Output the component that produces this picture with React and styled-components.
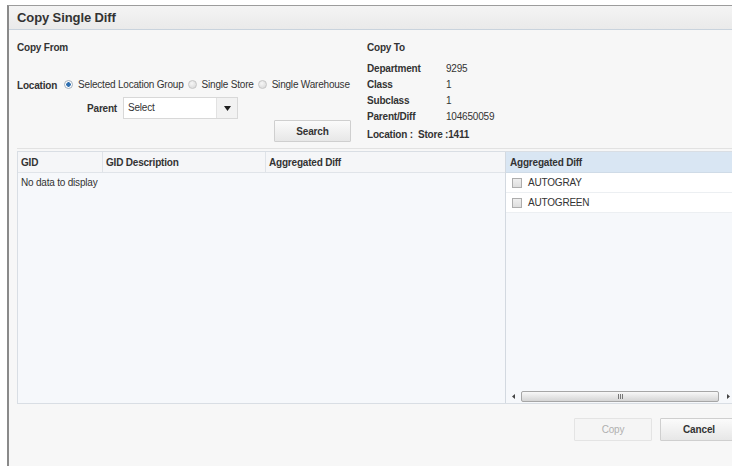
import React from "react";
import styled, { createGlobalStyle } from "styled-components";

const GlobalStyle = createGlobalStyle`
  html, body { margin: 0; padding: 0; overflow: hidden; background: #ffffff; }
  body { font-family: "Liberation Sans", Arial, sans-serif; color: #333333; }
  *, *::before, *::after { box-sizing: border-box; }
`;

const Page = styled.div`
  width: 732px;
  height: 466px;
  padding: 5px 0 0 7px;
  overflow: hidden;
`;

const Dialog = styled.section`
  width: 739px;
  height: 461px;
  display: flex;
  flex-direction: column;
  background: #f7f7f7;
  border-left: 2px solid #8a8a8a;
  border-top: 1px solid #9c9c9c;
`;

const TitleBar = styled.header`
  height: 24px;
  flex: none;
  display: flex;
  align-items: center;
  padding-left: 8px;
  background: linear-gradient(#f4f4f4, #eaeaea);
  border-bottom: 1px solid #c9d3dd;
  font-size: 13px;
  font-weight: bold;
  letter-spacing: -0.1px;
  color: #333333;
`;

const Body = styled.div`
  flex: 1;
  display: flex;
  flex-direction: column;
  padding: 0 8px;
  font-size: 10px;
  letter-spacing: -0.2px;
`;

const TopSection = styled.div`
  height: 119px;
  flex: none;
  display: flex;
  padding-top: 11px;
  border-bottom: 1px solid #e2e2e2;
`;

const FromColumn = styled.div`
  width: 334px;
  display: flex;
  flex-direction: column;
`;

const ToColumn = styled.div`
  margin-left: 16px;
  display: flex;
  flex-direction: column;
`;

const SectionTitle = styled.div`
  font-weight: bold;
  height: 14px;
  line-height: 14px;
`;

const LocationRow = styled.div`
  margin-top: 21px;
  height: 16px;
  display: flex;
  align-items: center;
  white-space: nowrap;
`;

const FieldLabel = styled.span`
  font-weight: bold;
  margin-right: 7px;
  position: relative;
  top: 1px;
`;

const RadioOption = styled.label`
  display: inline-flex;
  align-items: center;
  gap: 5px;
  margin-left: ${(p) => (p.$first ? 0 : 4)}px;
`;

const RadioDot = styled.span`
  width: 9px;
  height: 9px;
  border-radius: 50%;
  flex: none;
  border: 1px solid ${(p) => (p.$checked ? "#a3afbb" : "#c6c6c6")};
  background: ${(p) =>
    p.$checked
      ? "radial-gradient(circle, #2f6fb0 0 2px, #ffffff 2.5px)"
      : "radial-gradient(circle at 40% 35%, #f6f6f6, #d6d6d6)"};
`;

const ParentRow = styled.div`
  margin-top: 5px;
  height: 22px;
  display: flex;
  align-items: center;
`;

const ParentLabel = styled.span`
  width: 100px;
  text-align: right;
  font-weight: bold;
  margin-right: 6px;
`;

const SelectBox = styled.div`
  width: 115px;
  height: 22px;
  display: flex;
  background: #ffffff;
  border: 1px solid #d8d8d8;
`;

const SelectValue = styled.span`
  flex: 1;
  padding-left: 4px;
  line-height: 20px;
`;

const SelectArrow = styled.span`
  width: 21px;
  display: flex;
  align-items: center;
  justify-content: center;
  background: #f2f2f2;
  border-left: 1px solid #e2e2e2;
`;

const ActionButton = styled.button`
  width: ${(p) => p.$width || 77}px;
  height: ${(p) => p.$height || 22}px;
  padding: 0;
  font-family: inherit;
  font-size: 10px;
  letter-spacing: -0.15px;
  font-weight: ${(p) => (p.disabled ? "normal" : "bold")};
  color: ${(p) => (p.disabled ? "#b0b0b0" : "#333333")};
  border: 1px solid ${(p) => (p.disabled ? "#e4e4e4" : "#cfcfcf")};
  border-radius: 1px;
  background: ${(p) =>
    p.disabled ? "#f5f5f5" : "linear-gradient(#fbfbfb, #e7e7e7)"};
`;

const SearchButton = styled(ActionButton)`
  align-self: flex-end;
  margin-top: 1px;
`;

const InfoGrid = styled.div`
  margin-top: 5px;
  display: grid;
  grid-template-columns: 79px auto;
  grid-auto-rows: 16px;
  align-items: center;
`;

const InfoLabel = styled.span`
  font-weight: bold;
`;

const InfoValue = styled.span``;

const LocationLine = styled.div`
  margin-top: 4px;
  font-weight: bold;
  line-height: 14px;
  white-space: pre;
`;

const TableArea = styled.div`
  margin-top: 2px;
  height: 253px;
  flex: none;
  display: flex;
  border: 1px solid #d9dee4;
`;

const LeftTable = styled.div`
  width: 487px;
  display: flex;
  flex-direction: column;
  background: #f6f8fb;
`;

const HeaderRow = styled.div`
  display: grid;
  grid-template-columns: 85px 163px 1fr;
  height: 21px;
  background: #f5f6f8;
  border-bottom: 1px solid #e0e4e9;
`;

const HeaderCell = styled.div`
  display: flex;
  align-items: center;
  padding-left: 3px;
  font-weight: bold;
  border-right: ${(p) => (p.$last ? "none" : "1px solid #dfe3e8")};
`;

const EmptyMessage = styled.div`
  height: 20px;
  line-height: 20px;
  padding-left: 3px;
`;

const RightPanel = styled.div`
  flex: 1;
  display: flex;
  flex-direction: column;
  background: #f6f8fb;
  border-left: 1px solid #d3d9e0;
`;

const PanelHeader = styled.div`
  height: 21px;
  display: flex;
  align-items: center;
  padding-left: 4px;
  font-weight: bold;
  background: #d9e6f3;
  border-bottom: 1px solid #cfdbe7;
`;

const DiffRow = styled.label`
  height: 20px;
  display: flex;
  align-items: center;
  gap: 6px;
  padding-left: 6px;
  background: #ffffff;
  border-bottom: 1px solid #eceff2;
`;

const CheckBox = styled.span`
  width: 10px;
  height: 10px;
  flex: none;
  border: 1px solid #adadad;
  background: linear-gradient(#efefef, #dedede);
`;

const Filler = styled.div`
  flex: 1;
`;

const HScrollbar = styled.div`
  height: 13px;
  display: flex;
  align-items: center;
`;

const ScrollArrow = styled.span`
  width: ${(p) => p.$w}px;
  height: 13px;
  display: flex;
  align-items: center;
  justify-content: center;
`;

const ScrollTrack = styled.div`
  flex: 1;
  height: 11px;
  display: flex;
  align-items: center;
  justify-content: center;
  gap: 1px;
  border: 1px solid #a6a6a6;
  border-radius: 2px;
  background: linear-gradient(#f8f8f8, #d5d5d5);
`;

const GripLine = styled.span`
  width: 1px;
  height: 5px;
  background: #777777;
`;

const Footer = styled.div`
  margin-top: 14px;
  display: flex;
  justify-content: flex-end;
  gap: 8px;
`;

const DownTriangle = () => (
  <svg width="7" height="5" viewBox="0 0 7 5">
    <path d="M0 0h7L3.5 5z" fill="#1f1f1f" />
  </svg>
);

const SideTriangle = ({ dir }) => (
  <svg width="3" height="5" viewBox="0 0 3 5">
    <path d={dir === "left" ? "M3 0v5L0 2.5z" : "M0 0v5l3-2.5z"} fill="#444444" />
  </svg>
);

const locationChoices = [
  { label: "Selected Location Group", checked: true },
  { label: "Single Store", checked: false },
  { label: "Single Warehouse", checked: false },
];

const copyToInfo = [
  ["Department", "9295"],
  ["Class", "1"],
  ["Subclass", "1"],
  ["Parent/Diff", "104650059"],
];

const diffs = ["AUTOGRAY", "AUTOGREEN"];

export default function App() {
  return (
    <>
      <GlobalStyle />
      <Page>
        <Dialog>
          <TitleBar>Copy Single Diff</TitleBar>
          <Body>
            <TopSection>
              <FromColumn>
                <SectionTitle>Copy From</SectionTitle>
                <LocationRow>
                  <FieldLabel>Location</FieldLabel>
                  {locationChoices.map((c, i) => (
                    <RadioOption key={c.label} $first={i === 0}>
                      <RadioDot $checked={c.checked} />
                      {c.label}
                    </RadioOption>
                  ))}
                </LocationRow>
                <ParentRow>
                  <ParentLabel>Parent</ParentLabel>
                  <SelectBox>
                    <SelectValue>Select</SelectValue>
                    <SelectArrow>
                      <DownTriangle />
                    </SelectArrow>
                  </SelectBox>
                </ParentRow>
                <SearchButton>Search</SearchButton>
              </FromColumn>
              <ToColumn>
                <SectionTitle>Copy To</SectionTitle>
                <InfoGrid>
                  {copyToInfo.map(([k, v]) => (
                    <React.Fragment key={k}>
                      <InfoLabel>{k}</InfoLabel>
                      <InfoValue>{v}</InfoValue>
                    </React.Fragment>
                  ))}
                </InfoGrid>
                <LocationLine>{"Location :  Store :1411"}</LocationLine>
              </ToColumn>
            </TopSection>

            <TableArea>
              <LeftTable>
                <HeaderRow>
                  <HeaderCell>GID</HeaderCell>
                  <HeaderCell>GID Description</HeaderCell>
                  <HeaderCell $last>Aggregated Diff</HeaderCell>
                </HeaderRow>
                <EmptyMessage>No data to display</EmptyMessage>
              </LeftTable>
              <RightPanel>
                <PanelHeader>Aggregated Diff</PanelHeader>
                {diffs.map((d) => (
                  <DiffRow key={d}>
                    <CheckBox />
                    {d}
                  </DiffRow>
                ))}
                <Filler />
                <HScrollbar>
                  <ScrollArrow $w={15}>
                    <SideTriangle dir="left" />
                  </ScrollArrow>
                  <ScrollTrack>
                    <GripLine />
                    <GripLine />
                    <GripLine />
                  </ScrollTrack>
                  <ScrollArrow $w={18}>
                    <SideTriangle dir="right" />
                  </ScrollArrow>
                </HScrollbar>
              </RightPanel>
            </TableArea>

            <Footer>
              <ActionButton disabled $width={78} $height={23}>
                Copy
              </ActionButton>
              <ActionButton $width={78} $height={23}>
                Cancel
              </ActionButton>
            </Footer>
          </Body>
        </Dialog>
      </Page>
    </>
  );
}
